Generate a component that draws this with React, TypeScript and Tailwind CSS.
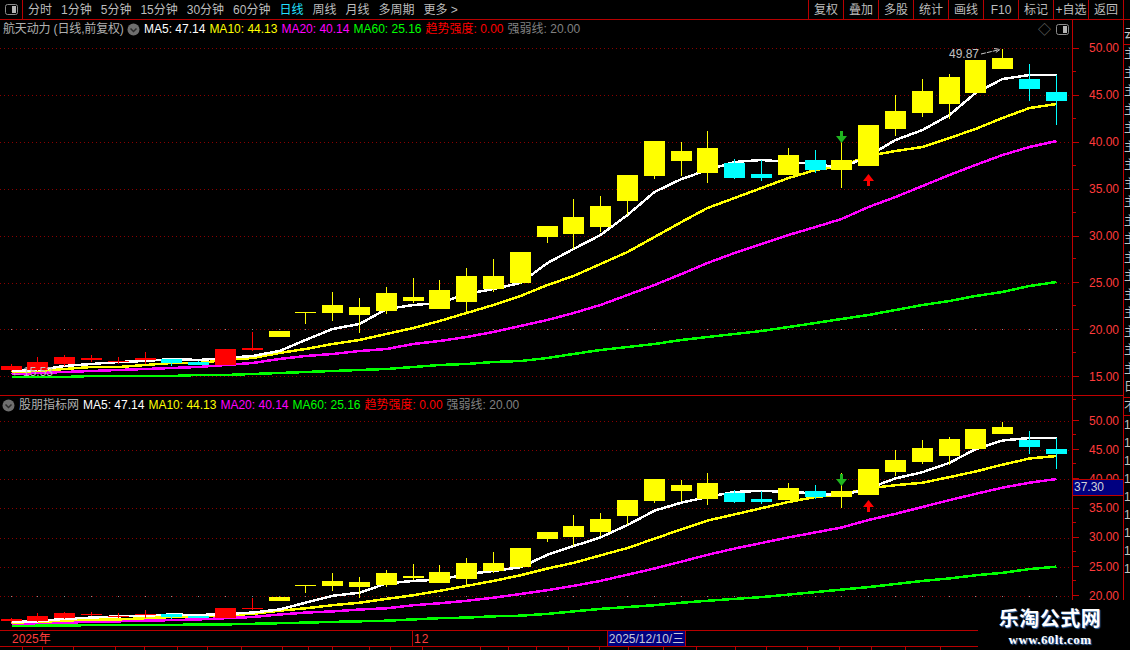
import type { ReactNode } from "react";

type Candle = [number, number, number, number, "r" | "y" | "c"];

const fontClass = "[font-family:'Liberation_Sans','Noto_Sans_CJK_SC',sans-serif]";

const centers = [
  11.5, 37.5, 64.5, 91.5, 118.5, 145.5, 171.5, 198.5, 225.5, 252.5, 279.5, 305.5, 332.5, 359.5, 386.5, 413.5, 439.5,
  466.5, 493.5, 520.5, 547.5, 573.5, 600.5, 627.5, 654.5, 681.5, 707.5, 734.5, 761.5, 788.5, 815.5, 841.5, 868.5,
  895.5, 922.5, 949.5, 975.5, 1002.5, 1029.5, 1056.5,
];

// body top, body bottom, wick top, wick bottom (page y of the upper chart)
const candles: Candle[] = [
  [366, 370, 364, 371, "r"],
  [362, 370, 357, 371, "r"],
  [357, 364, 355, 366, "r"],
  [358, 360, 355, 362, "r"],
  [361, 362, 357, 364, "r"],
  [358, 360, 352, 364, "r"],
  [359, 363, 359, 366, "c"],
  [362, 365, 361, 365, "c"],
  [349, 365, 349, 365, "r"],
  [348, 350, 332, 351, "r"],
  [331, 337, 331, 337, "y"],
  [312, 313, 312, 324, "y"],
  [305, 313, 292, 321, "y"],
  [307, 315, 298, 333, "y"],
  [293, 311, 287, 314, "y"],
  [297, 301, 278, 303, "y"],
  [290, 309, 280, 309, "y"],
  [276, 302, 268, 312, "y"],
  [276, 289, 259, 292, "y"],
  [252, 283, 252, 284, "y"],
  [226, 237, 226, 243, "y"],
  [217, 234, 199, 249, "y"],
  [206, 227, 196, 232, "y"],
  [175, 201, 175, 215, "y"],
  [141, 176, 141, 179, "y"],
  [151, 161, 142, 176, "y"],
  [148, 173, 131, 183, "y"],
  [163, 178, 159, 179, "c"],
  [174, 178, 160, 181, "c"],
  [155, 175, 148, 175, "y"],
  [160, 170, 150, 173, "c"],
  [160, 170, 131, 188, "y"],
  [125, 166, 125, 166, "y"],
  [111, 129, 95, 136, "y"],
  [91, 113, 79, 117, "y"],
  [77, 104, 74, 119, "y"],
  [60, 93, 60, 93, "y"],
  [58, 69, 49, 69, "y"],
  [79, 89, 64, 101, "c"],
  [92, 101, 75, 125, "c"],
];

const ma5 = [
  371, 370, 366, 364, 362, 361, 359, 360, 358, 356, 351, 340, 329, 324, 309, 305, 303, 294, 289, 283, 263, 249, 235,
  215, 192, 179, 170, 162, 160, 162, 164, 168, 156, 140, 130, 115, 93, 79, 75, 75,
];
const ma10 = [
  372, 371, 369, 367, 367, 365, 363, 363, 360, 358, 353, 349, 344, 340, 334, 328, 321, 313, 305, 296, 285, 276, 264,
  252, 237, 222, 208, 198, 188, 178, 170, 166, 156, 151, 147, 138, 129, 118, 108, 104,
];
const ma20 = [
  374, 373, 372, 371, 370, 369, 368, 367, 365, 363, 359, 356, 354, 351, 349, 344, 341, 337, 332, 326, 320, 313, 305,
  295, 285, 274, 263, 253, 244, 235, 227, 219, 207, 197, 186, 175, 165, 155, 147, 141,
];
const ma60 = [
  377, 377, 377, 376, 376, 376, 376, 375, 375, 374, 373, 372, 371, 370, 369, 367, 365, 364, 362, 361, 358, 354, 350,
  347, 344, 340, 337, 334, 331, 327, 323, 319, 315, 310, 305, 301, 296, 292, 286, 282,
];

const colors = { r: "#ff0000", y: "#ffff00", c: "#00ffff" };

const toLower = (y: number) => 421.5 + (y - 48.5) * 0.6215;
const same = (y: number) => y;

const upperGrid = [48.5, 95.5, 142.5, 189.5, 236.5, 283.5, 329.5, 376.5];
const lowerGrid = [421.5, 450.5, 479.5, 508.5, 538.5, 567.5, 596.5];

const leftTabs = ["分时", "1分钟", "5分钟", "15分钟", "30分钟", "60分钟", "日线", "周线", "月线", "多周期", "更多 >"];
const rightTabs = ["复权", "叠加", "多股", "统计", "画线", "F10", "标记", "+自选", "返回"];
const bottomTicks = [
  22, 42, 73, 115, 144, 177, 207, 241, 282, 308, 332, 369, 390, 422, 480, 508, 536, 568, 599, 628, 663, 696, 735, 766,
  807, 839, 871, 905, 940,
];

const ToggleIcon = () => (
  <svg width="13" height="11" viewBox="0 0 13 11" className="shrink-0">
    <rect x="0.5" y="0.5" width="12" height="10" rx="2" fill="#000" stroke="#8c8c8c" />
    <rect x="7" y="2" width="4" height="7" fill="#b4b4b4" />
  </svg>
);

const ChevronDisc = () => (
  <svg width="13" height="13" viewBox="0 0 13 13" className="shrink-0">
    <circle cx="6.5" cy="6.5" r="6" fill="#6e6e6e" />
    <path d="M3.5 5.5 L6.5 8.5 L9.5 5.5" fill="none" stroke="#2a2a2a" strokeWidth="1.5" />
  </svg>
);

const Legend = () => (
  <>
    <span className="text-white">MA5: 47.14</span>
    <span className="text-[#ffff00]">MA10: 44.13</span>
    <span className="text-[#ff00ff]">MA20: 40.14</span>
    <span className="text-[#00ff00]">MA60: 25.16</span>
    <span className="text-[#ff0000]">趋势强度: 0.00</span>
    <span className="text-[#808080]">强弱线: 20.00</span>
  </>
);

const Arrow = ({ x, y, down }: { x: number; y: number; down?: boolean }) =>
  down ? (
    <g fill="#1fb51f">
      <rect x={x - 1} y={y} width="3" height="6" />
      <path d={`M${x - 5} ${y + 5} H${x + 6} L${x + 0.5} ${y + 12} Z`} />
    </g>
  ) : (
    <g fill="#ff0000">
      <rect x={x - 1} y={y + 6} width="3" height="6" />
      <path d={`M${x - 5} ${y + 7} H${x + 6} L${x + 0.5} ${y} Z`} />
    </g>
  );

const Chart = ({
  top,
  height,
  grid,
  map,
  children,
}: {
  top: number;
  height: number;
  grid: number[];
  map: (y: number) => number;
  children?: ReactNode;
}) => {
  const line = (values: number[]) => values.map((v, i) => `${centers[i]},${map(v).toFixed(1)}`).join(" ");
  return (
    <svg width="1072" height={height} viewBox={`0 ${top} 1072 ${height}`} className="block">
      {grid.map((y) => (
        <line key={y} x1="0" x2="1072" y1={y} y2={y} stroke="#8a0000" strokeDasharray="1 3" shapeRendering="crispEdges" />
      ))}
      {centers.map((c) => (
        <rect key={c} x={c - 0.5} y={grid[6] - 0.5} width="1" height="1" fill="#8a8a8a" />
      ))}
      <g fill="none" strokeWidth="2.5" shapeRendering="crispEdges">
        <polyline points={line(ma60)} stroke="#00ff00" />
        <polyline points={line(ma20)} stroke="#ff00ff" />
        <polyline points={line(ma10)} stroke="#ffff00" />
        <polyline points={line(ma5)} stroke="#ffffff" />
      </g>
      <g shapeRendering="crispEdges">
        {candles.map(([a, b, w1, w2, kind], i) => {
          const c = centers[i];
          const y1 = Math.round(map(a));
          const y2 = Math.round(map(b));
          const wt = Math.round(map(w1));
          const wb = Math.round(map(w2));
          return (
            <g key={c} fill={colors[kind]}>
              <rect x={c - 0.5} y={wt} width="1" height={Math.max(wb - wt, 1)} />
              <rect x={c - 10.5} y={y1} width="21" height={Math.max(y2 - y1, 1)} />
            </g>
          );
        })}
      </g>
      {children}
    </svg>
  );
};

const AxisRow = ({ label, h }: { label: string; h: string }) => (
  <div className={`relative flex items-center ${h}`}>
    <div className="w-[6px] h-px bg-[#c00000]" />
    <span className="ml-[10px] text-[12px] leading-none text-[#ff3b3b]">{label}</span>
    <div className="absolute left-0 bottom-0 w-[3px] h-px bg-[#c00000]" />
  </div>
);

export default function App() {
  return (
    <div className={`relative w-[1130px] h-[650px] overflow-hidden bg-black text-[12px] leading-none ${fontClass}`}>
      <div className="flex h-[20px] border-b border-[#b80000] pr-[6px] text-[#bdbdbd]">
        <div className="flex w-[23px] items-center justify-center border-r border-[#b80000]">
          <ToggleIcon />
        </div>
        <div className="flex flex-1 items-center gap-[9px] pl-[5px]">
          {leftTabs.map((tab) => (
            <span key={tab} className={tab === "日线" ? "text-[#22e0ff]" : ""}>
              {tab}
            </span>
          ))}
        </div>
        <div className="flex border-l border-[#b80000]">
          {rightTabs.map((tab) => (
            <div key={tab} className="flex w-[35px] items-center justify-center border-r border-[#b80000] whitespace-nowrap">
              {tab}
            </div>
          ))}
        </div>
      </div>

      <div className="flex h-[610px]">
        <div className="w-[1072px] shrink-0">
          <div className="h-[376px] border-b border-[#c00000]">
            <div className="flex h-[18px] items-center gap-[4px] pl-[3px] pr-[3px]">
              <span className="w-[120px] tracking-[-0.15px] text-[#b0b0b0] whitespace-nowrap">航天动力 (日线,前复权)</span>
              <ChevronDisc />
              <Legend />
              <div className="ml-auto flex items-center gap-[5px]">
                <span className="text-[13px] text-[#6e6e6e]">◇</span>
                <ToggleIcon />
              </div>
            </div>
            <Chart top={38} height={357} grid={upperGrid} map={same}>
              <text x="949" y="58" fontSize="12" fill="#c0c0c0">
                49.87
              </text>
              <path d="M981 54 L998 50 M994 48.5 L1000 49.5 L995 53" fill="none" stroke="#c8c8c8" strokeDasharray="5 1" />
              <text x="11" y="376" fontSize="12" fill="#c0c0c0">
                ←15.53
              </text>
              <Arrow x={841} y={131} down />
              <Arrow x={868} y={174} />
            </Chart>
          </div>
          <div>
            <div className="flex h-[18px] items-center gap-[4px] pl-[2px]">
              <ChevronDisc />
              <span className="text-[#b0b0b0] whitespace-nowrap">股朋指标网</span>
              <Legend />
            </div>
            <Chart top={414} height={216} grid={lowerGrid} map={toLower}>
              <Arrow x={841} y={474} down />
              <Arrow x={868} y={500} />
            </Chart>
          </div>
        </div>

        <div className="relative w-[52px] shrink-0 border-x border-[#c00000]">
          <div className="h-[376px] border-b border-[#c00000] pt-[5px]">
            {["50.00", "45.00", "40.00", "35.00", "30.00", "25.00", "20.00", "15.00"].map((label) => (
              <AxisRow key={label} label={label} h="h-[46.9px]" />
            ))}
          </div>
          <div className="pt-[10px]">
            {["50.00", "45.00", "40.00", "35.00", "30.00", "25.00", "20.00"].map((label) => (
              <AxisRow key={label} label={label} h="h-[29.2px]" />
            ))}
          </div>
          <div className="absolute left-0 right-0 top-[459px] h-[17px] border-y border-[#c00000] bg-[#000080] pl-px text-[12px] leading-[15px] text-[#d0d0d8]">
            37.30
          </div>
        </div>

        <div className="w-[6px] overflow-hidden text-[12px] text-[#c4c4c4]">
          <div className="h-[25px] border-b border-[#c00000] pt-[8px]">云</div>
          {Array.from({ length: 19 }).map((_, i) => (
            <div key={i} className="h-[18.5px] leading-[18.5px]">
              {i < 18 ? "主" : "日"}
            </div>
          ))}
          <div className="h-[19px] border-y border-[#c00000] leading-[18px]">不</div>
          {Array.from({ length: 9 }).map((_, i) => (
            <div key={i} className="h-[18px] leading-[18px]">
              1
            </div>
          ))}
        </div>
      </div>

      <div className="relative flex h-[17px] w-[1072px] items-center border-y border-[#b80000] text-[#ff3b3b]">
        <span className="ml-[12px] w-[400px]">2025年</span>
        <span className="flex h-full items-center border-l border-[#b80000] pl-[1px] tracking-[1px]">12</span>
        <span className="absolute left-[607px] top-0 flex h-[15px] w-[79px] items-center justify-center border-x border-[#b80000] bg-[#000080] text-[#c8c8d8]">
          2025/12/10/三
        </span>
      </div>
      <svg width="1072" height="3" viewBox="0 0 1072 3" className="block">
        {bottomTicks.map((x) => (
          <rect key={x} x={x} y="0" width="1" height="3" fill="#b80000" />
        ))}
      </svg>

      <div className="absolute bottom-0 right-0 flex h-[50px] w-[152px] flex-col items-center bg-black pr-[8px] pt-[7px] text-white">
        <span className="text-[20px] font-bold leading-[24px] tracking-[0.5px] [text-shadow:1px_1px_1px_#3a6fb0]">
          乐淘公式网
        </span>
        <span className="mt-[2px] [font-family:'Liberation_Serif',serif] text-[13px] font-bold leading-[14px] tracking-[0.4px] [text-shadow:1px_1px_1px_#3a6fb0]">
          www.60lt.com
        </span>
      </div>
    </div>
  );
}
